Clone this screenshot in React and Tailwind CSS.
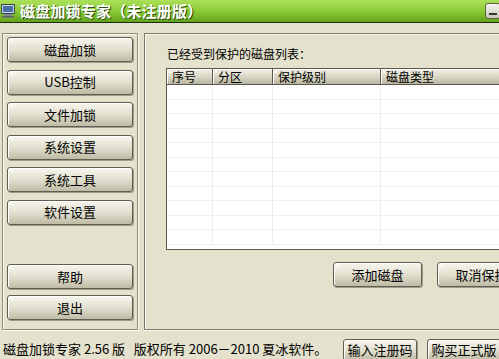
import React from "react";

const FONT = { fontFamily: '"Noto Sans CJK SC", "Noto Sans", sans-serif' };

const Btn = ({ label, className = "" }) => (
    <div className={`relative shrink-0 flex items-center justify-center rounded-[3px] border border-[#5f5e50] bg-gradient-to-b from-[#f7f6ee] via-[#e2e0cf] to-[#bebca6] shadow-[inset_1px_1px_0_#ffffff,1px_1px_0_#9d9c8a] text-[13px] leading-[16px] text-black ${className}`}>
        <span className="absolute top-[2px] left-[3px] w-[2px] h-[2px] bg-white" />
        {label}
    </div>
);

const HeadCell = ({ label, w }) => (
    <div className={`relative h-full flex items-center pl-[5px] border-r border-[#5a594c] shadow-[inset_1px_1px_0_#ffffff] ${w}`}>
        <span className="absolute top-[2px] left-[2px] w-[2px] h-[2px] bg-white" />
        {label}
    </div>
);

const App = () => {
    const leftTop = ["磁盘加锁", "USB控制", "文件加锁", "系统设置", "系统工具", "软件设置"];
    const rows = Array.from({ length: 11 });

    return (
        <div style={FONT} className="w-[499px] h-[359px] overflow-hidden bg-[#e4e2cd] flex flex-col text-black">
            {/* title bar */}
            <div className="h-[23px] shrink-0 flex items-center bg-gradient-to-b from-[#ace05a] via-[#8ccb34] to-[#62a31c] border-b border-[#1d2a10]">
                <svg width="16" height="14" viewBox="0 0 16 14" className="ml-[1px] shrink-0">
                    <rect x="0.5" y="0.5" width="13" height="9" fill="#cfd6dc" stroke="#3c4650" />
                    <rect x="2" y="2" width="10" height="6" fill="#4a6fa8" />
                    <rect x="3" y="10" width="8" height="2" fill="#7d8790" />
                    <rect x="1" y="12" width="12" height="1.5" fill="#59626b" />
                </svg>
                <span className="ml-[3px] text-[15px] font-bold text-white tracking-[0.2px] [text-shadow:1px_1px_0_#2e4d10]">磁盘加锁专家（未注册版）</span>
                <div className="ml-auto mr-[-2px] w-[16px] h-[16px] rounded-[3px] border border-[#59623f] bg-gradient-to-b from-[#f4f4ee] to-[#c9c9bc] flex items-end justify-center pb-[3px]">
                    <span className="w-[8px] h-[2px] bg-[#333]" />
                </div>
            </div>

            {/* body */}
            <div className="flex pt-[10px] h-[307px] shrink-0">
                <div className="ml-[2px] w-[136px] shrink-0 h-full border border-[#8e8c79] shadow-[inset_1px_1px_0_#fbfbf3,1px_1px_0_#fbfbf3] flex flex-col px-[4px] pt-[3px] pb-[9px]">
                    <div className="flex flex-col gap-[7.5px]">
                        {leftTop.map((t) => (
                            <Btn key={t} label={t} className="h-[25px]" />
                        ))}
                    </div>
                    <div className="mt-auto flex flex-col gap-[6px]">
                        <Btn label="帮助" className="h-[25px]" />
                        <Btn label="退出" className="h-[25px]" />
                    </div>
                </div>

                <div className="ml-[6px] w-[400px] shrink-0 h-full border-l border-t border-b border-[#7d7c6c] shadow-[inset_1px_1px_0_#fbfbf3,0_1px_0_#fbfbf3] pl-[21px] pt-[12px] flex flex-col">
                    <div className="ml-[1px] text-[12px] leading-[16px]">已经受到保护的磁盘列表：</div>
                    <div className="mt-[6px] w-[370px] h-[182px] shrink-0 border border-[#5a594c] bg-white flex flex-col">
                        <div className="h-[16px] shrink-0 flex text-[12px] bg-gradient-to-b from-[#f1f0e6] via-[#dad8c6] to-[#b9b7a2] border-b border-[#5a594c]">
                            <HeadCell label="序号" w="w-[46px]" />
                            <HeadCell label="分区" w="w-[60px]" />
                            <HeadCell label="保护级别" w="w-[108px]" />
                            <HeadCell label="磁盘类型" w="flex-1" />
                        </div>
                        <div className="flex-1 flex flex-col overflow-hidden">
                            {rows.map((_, i) => (
                                <div key={i} className="h-[14.5px] shrink-0 flex border-b border-[#efefef]">
                                    <div className="w-[46px] border-r border-[#efefef]" />
                                    <div className="w-[60px] border-r border-[#efefef]" />
                                    <div className="w-[108px] border-r border-[#efefef]" />
                                    <div className="flex-1" />
                                </div>
                            ))}
                        </div>
                    </div>
                    <div className="mt-[12px] ml-[167px] flex gap-[15px]">
                        <Btn label="添加磁盘" className="w-[89px] h-[25px]" />
                        <Btn label="取消保护" className="w-[89px] h-[25px]" />
                    </div>
                </div>
            </div>

            {/* status bar */}
            <div className="flex items-start pl-[3px] pt-[9px] text-[13px] whitespace-nowrap">
                <span className="mt-[1px] w-[340px] shrink-0 leading-[18px]">磁盘加锁专家 2.56 版&nbsp;&nbsp;&nbsp;版权所有 2006－2010 夏冰软件。</span>
                <div className="flex gap-[10px]">
                    <Btn label="输入注册码" className="w-[74px] h-[22px]" />
                    <Btn label="购买正式版" className="w-[74px] h-[22px]" />
                </div>
            </div>
        </div>
    );
};

export default App;
